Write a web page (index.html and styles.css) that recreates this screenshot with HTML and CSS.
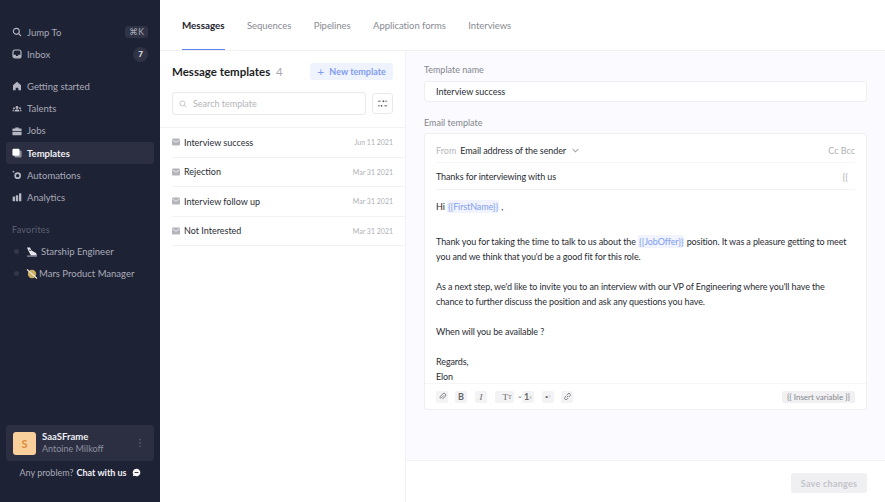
FILE: index.html
```html
<!DOCTYPE html>
<html lang="en">
<head>
  <meta charset="UTF-8">
  <title>Templates</title>
  <link rel="stylesheet" href="styles.css">
</head>
<body>
  <aside class="sidebar">
    <nav class="nav nav-top">
      <a class="nav-item">
        <svg class="nav-icon" viewBox="0 0 12 12"><circle cx="5.2" cy="5.2" r="3.6" fill="none" stroke="currentColor" stroke-width="1.3"/><path d="M8 8l2.8 2.8" stroke="currentColor" stroke-width="1.3"/></svg>
        <span>Jump To</span>
        <span class="kbd">⌘K</span>
      </a>
      <a class="nav-item">
        <svg class="nav-icon" viewBox="0 0 12 12"><rect x="1.2" y="1.2" width="9.6" height="9.6" rx="2.4" fill="none" stroke="currentColor" stroke-width="1.4"/><path d="M1.5 7h2.7l.8 1.3h2l.8-1.3h2.7v3.5h-9z" fill="currentColor"/></svg>
        <span>Inbox</span>
        <span class="count">7</span>
      </a>
    </nav>
    <nav class="nav nav-main">
      <a class="nav-item">
        <svg class="nav-icon" viewBox="0 0 12 12"><path d="M6 1l4.8 4v6H7.6V8H4.4v3H1.2V5z" fill="currentColor"/></svg>
        <span>Getting started</span>
      </a>
      <a class="nav-item">
        <svg class="nav-icon" viewBox="0 0 12 12"><circle cx="6" cy="4.2" r="1.7" fill="currentColor"/><circle cx="2.4" cy="5" r="1.1" fill="currentColor"/><circle cx="9.6" cy="5" r="1.1" fill="currentColor"/><path d="M3 9c0-2 1.4-2.8 3-2.8S9 7 9 9zM.5 8.600c0-1.300.8-2 1.700-2v2zM11.500 8.600c0-1.300-.8-2-1.700-2v2z" fill="currentColor"/></svg>
        <span>Talents</span>
      </a>
      <a class="nav-item">
        <svg class="nav-icon" viewBox="0 0 12 12"><path d="M4 3V1.800h4V3h2.800c.4 0 .7.3.7.700V6H.5V3.700c0-.4.3-.7.7-.7zM.5 7h11v3.300c0 .4-.3.700-.7.700H1.200c-.4 0-.7-.3-.7-.7z" fill="currentColor"/></svg>
        <span>Jobs</span>
      </a>
      <a class="nav-item active">
        <svg class="nav-icon" viewBox="0 0 12 12"><rect x="3" y="3" width="8.500" height="8.500" rx="1.500" fill="#8d8f9c"/><rect x=".5" y=".8" width="8.500" height="8.500" rx="1.500" fill="#fff"/></svg>
        <span>Templates</span>
      </a>
      <a class="nav-item">
        <svg class="nav-icon" viewBox="0 0 12 12"><circle cx="6.800" cy="6.800" r="3" fill="none" stroke="currentColor" stroke-width="2"/><circle cx="1.800" cy="2" r="1" fill="currentColor"/></svg>
        <span>Automations</span>
      </a>
      <a class="nav-item">
        <svg class="nav-icon" viewBox="0 0 12 12"><rect x=".8" y="5.500" width="2.800" height="5.500" rx=".6" fill="currentColor"/><rect x="4.600" y="3.800" width="2.800" height="7.200" rx=".6" fill="currentColor"/><rect x="8.400" y="1.500" width="2.800" height="9.500" rx=".6" fill="currentColor"/></svg>
        <span>Analytics</span>
      </a>
    </nav>
    <div class="fav-title">Favorites</div>
    <nav class="nav">
      <a class="nav-item fav">
        <span class="dot"></span>
        <svg class="emoji" viewBox="0 0 12 12"><path d="M1 1.500h3l1.500 3L10 7l1 2.500H5L2.500 5z" fill="#e6e6ea"/><path d="M1 9.500h10v1.200H1z" fill="#8f93a3"/><path d="M3 4l2 .5" stroke="#444a60"/></svg>
        <span>Starship Engineer</span>
      </a>
      <a class="nav-item fav">
        <span class="dot"></span>
        <svg class="emoji emoji-tight" viewBox="0 0 12 12"><circle cx="6" cy="6" r="4.200" fill="#c9ad62"/><path d="M1 1.500L11 10.500" stroke="#e8e4d4" stroke-width="1.200"/></svg>
        <span>Mars Product Manager</span>
      </a>
    </nav>
    <div class="sidebar-bottom">
      <div class="user-card">
        <div class="avatar">S</div>
        <div class="user-text">
          <div class="user-org">SaaSFrame</div>
          <div class="user-name">Antoine Milkoff</div>
        </div>
        <svg class="user-more" viewBox="0 0 4 12"><circle cx="2" cy="2" r=".8"/><circle cx="2" cy="6" r=".8"/><circle cx="2" cy="10" r=".8"/></svg>
      </div>
      <div class="help">
        Any problem? <b>Chat with us</b>
        <svg class="help-icon" viewBox="0 0 10 10"><path d="M5 .8a4.200 4.200 0 1 1-2 7.900L.9 9.300l.6-2A4.200 4.200 0 0 1 5 .8z" fill="#fff"/><path d="M2.800 5h4.400" stroke="#1e2235"/></svg>
      </div>
    </div>
  </aside>

  <main class="main">
    <header class="tabs">
      <a class="tab active">Messages</a>
      <a class="tab">Sequences</a>
      <a class="tab">Pipelines</a>
      <a class="tab">Application forms</a>
      <a class="tab">Interviews</a>
    </header>
    <div class="content">
      <section class="list-panel">
        <div class="list-head">
          <h2>Message templates <span class="list-count">4</span></h2>
          <button class="new-btn"><span class="plus">+</span> New template</button>
        </div>
        <div class="search-row">
          <div class="search">
            <svg class="search-icon" viewBox="0 0 12 12"><circle cx="5.200" cy="5.200" r="3.800" fill="none" stroke="currentColor" stroke-width="1.100"/><path d="M8 8l3 3" stroke="currentColor" stroke-width="1.100"/></svg>
            Search template
          </div>
          <button class="sort-btn">
            <svg viewBox="0 0 12 12"><path d="M1 3.500h3M9 3.500h2M1 8.500h2M8 8.500h3" stroke="#555a68" stroke-width="1"/><circle cx="7" cy="3.500" r="1" fill="#555a68"/><circle cx="5" cy="8.500" r="1" fill="#555a68"/></svg>
          </button>
        </div>
        <ul class="templates">
          <li class="template"><svg class="mail" viewBox="0 0 10 8"><rect width="8" height="7" x="1" y=".5" rx="1" fill="#b4b5bb"/><path d="M1.500 2L5 4.200 8.500 2" fill="none" stroke="#fff" stroke-width=".7"/></svg><span class="template-name">Interview success</span><span class="template-date">Jun 11 2021</span></li>
          <li class="template"><svg class="mail" viewBox="0 0 10 8"><rect width="8" height="7" x="1" y=".5" rx="1" fill="#b4b5bb"/><path d="M1.500 2L5 4.200 8.500 2" fill="none" stroke="#fff" stroke-width=".7"/></svg><span class="template-name">Rejection</span><span class="template-date">Mar 31 2021</span></li>
          <li class="template"><svg class="mail" viewBox="0 0 10 8"><rect width="8" height="7" x="1" y=".5" rx="1" fill="#b4b5bb"/><path d="M1.500 2L5 4.200 8.500 2" fill="none" stroke="#fff" stroke-width=".7"/></svg><span class="template-name">Interview follow up</span><span class="template-date">Mar 31 2021</span></li>
          <li class="template"><svg class="mail" viewBox="0 0 10 8"><rect width="8" height="7" x="1" y=".5" rx="1" fill="#b4b5bb"/><path d="M1.500 2L5 4.200 8.500 2" fill="none" stroke="#fff" stroke-width=".7"/></svg><span class="template-name">Not Interested</span><span class="template-date">Mar 31 2021</span></li>
        </ul>
      </section>
      <section class="detail">
        <div class="form">
          <label class="field-label">Template name</label>
          <div class="name-input">Interview success</div>
          <label class="field-label email-label">Email template</label>
          <div class="email-card">
            <div class="from-row">
              <span class="from">From</span>
              <span class="sender">Email address of the sender</span>
              <svg class="chev" viewBox="0 0 10 6"><path d="M1 1l4 4 4-4" fill="none" stroke="#555" stroke-width="1.100"/></svg>
              <span class="ccbcc">Cc Bcc</span>
            </div>
            <div class="subject-row">
              <span class="subject">Thanks for interviewing with us</span>
              <span class="subject-var">{{</span>
            </div>
            <div class="body">
              <p class="hi">Hi <span class="var">{{FirstName}}</span> ,</p>
              <p>Thank you for taking the time to talk to us about the <span class="var">{{JobOffer}}</span> position. It was a pleasure getting to meet<br>you and we think that you'd be a good fit for this role.</p>
              <p>As a next step, we'd like to invite you to an interview with our VP of Engineering where you'll have the<br>chance to further discuss the position and ask any questions you have.</p>
              <p>When will you be available ?</p>
              <p class="sign">Regards,<br>Elon</p>
            </div>
            <div class="toolbar">
              <span class="tool"><svg viewBox="0 0 12 12"><path d="M8 4.500L4.500 8a1.300 1.300 0 0 1-1.800-1.800L6.800 2.200a2.300 2.300 0 0 1 3.200 3.200L6 9.500" fill="none" stroke="#666" stroke-width="1"/></svg></span>
              <span class="tool tool-b">B</span>
              <span class="tool tool-i">I</span>
              <span class="tool tool-size">T<small>T</small></span>
              <span class="tool-arrow">⌄</span>
              <span class="tool tool-num">1<small>≡</small></span>
              <span class="tool tool-bul">•<small>≡</small></span>
              <span class="tool"><svg viewBox="0 0 12 12"><path d="M5 7l2-2M4.500 5L2.500 7a2 2 0 0 0 2.800 2.800l1.500-1.800M7.500 7l2-2a2 2 0 0 0-2.800-2.800L5.200 4" fill="none" stroke="#666" stroke-width="1"/></svg></span>
              <span class="insert">{{ Insert variable }}</span>
            </div>
          </div>
        </div>
        <div class="detail-foot">
          <button class="save">Save changes</button>
        </div>
      </section>
    </div>
  </main>
</body>
</html>
```
FILE: styles.css
```css
* {
  box-sizing: border-box;
}

html, body {
  height: 100%;
}

body {
  margin: 0;
  display: flex;
  height: 502px;
  overflow: hidden;
  font-family: Lato, "Open Sans", sans-serif;
  font-size: 9px;
  color: #24262f;
  background: #fff;
}

/* Sidebar */
.sidebar {
  width: 160px;
  flex-shrink: 0;
  background: #1e2235;
  color: #a9abb8;
  display: flex;
  flex-direction: column;
  padding: 21px 6px 0;
}

.nav {
  display: flex;
  flex-direction: column;
}

.nav-main {
  margin-top: 10px;
}

.nav-item {
  height: 22.2px;
  display: flex;
  align-items: center;
  gap: 5px;
  padding: 0 6px;
  border-radius: 3px;
  font-size: 9.5px;
}

.nav-icon {
  width: 10px;
  height: 10px;
  flex-shrink: 0;
  color: #b4b6c2;
}

.nav-item.active {
  background: #2b2f41;
  color: #f0f0f4;
  font-weight: 700;
}

.kbd {
  margin-left: auto;
  background: #2f3345;
  border-radius: 3px;
  font-size: 8.5px;
  padding: 1px 4px;
  color: #a9abb8;
}

.count {
  margin-left: auto;
  width: 15px;
  height: 15px;
  border-radius: 50%;
  background: #2f3345;
  color: #e4e4ea;
  font-size: 8px;
  font-weight: 700;
  display: flex;
  align-items: center;
  justify-content: center;
}

.fav-title {
  margin: 15px 0 6px;
  padding-left: 6px;
  font-size: 9px;
  letter-spacing: .25px;
  color: #5c6072;
}

.dot {
  width: 5px;
  height: 5px;
  border-radius: 50%;
  background: #333749;
  margin: 0 2px;
}

.emoji {
  width: 12px;
  height: 12px;
  margin-right: -2px;
  flex-shrink: 0;
}

.emoji-tight {
  margin-right: -4px;
}

.sidebar-bottom {
  margin-top: auto;
}

.user-card {
  height: 36px;
  background: #2b2f41;
  border-radius: 3px;
  display: flex;
  align-items: center;
  padding: 0 8px 0 7px;
  gap: 6px;
}

.avatar {
  width: 23px;
  height: 23px;
  border-radius: 3px;
  background: #f9cf9b;
  color: #dd8a3c;
  font-size: 11px;
  font-weight: 700;
  display: flex;
  align-items: center;
  justify-content: center;
}

.user-text {
  flex: 1;
  line-height: 12.5px;
}

.user-org {
  color: #eeeef2;
  font-weight: 700;
  font-size: 9.5px;
}

.user-name {
  color: #8e90a0;
}

.user-more {
  width: 4px;
  height: 10px;
  fill: #7d7f90;
  margin-right: 4px;
}

.help {
  height: 41px;
  display: flex;
  align-items: center;
  justify-content: center;
  gap: 3px;
  font-size: 9px;
  padding-bottom: 18px;
  color: #a9abb8;
}

.help b {
  color: #f0f0f4;
}

.help-icon {
  width: 9px;
  height: 9px;
  margin-left: 2px;
}

/* Main */
.main {
  flex: 1;
  display: flex;
  flex-direction: column;
  min-width: 0;
}

.tabs {
  height: 51px;
  display: flex;
  gap: 22.5px;
  padding-left: 22px;
  border-bottom: 1px solid #f0f0f5;
  flex-shrink: 0;
}

.tab {
  height: 50px;
  display: flex;
  align-items: center;
  font-size: 9.5px;
  letter-spacing: -.05px;
  color: #888a92;
}

.tab.active {
  color: #22242c;
  font-weight: 700;
  font-size: 9.8px;
  letter-spacing: 0;
  border-bottom: 1px solid #5b83e8;
}

.content {
  flex: 1;
  display: flex;
  min-height: 0;
}

.list-panel {
  width: 246px;
  flex-shrink: 0;
  border-right: 1px solid #f0f0f5;
}

.list-head {
  display: flex;
  align-items: center;
  justify-content: space-between;
  padding: 9px 12px 0;
  height: 32px;
}

h2 {
  margin: 0;
  font-size: 11.5px;
  font-weight: 700;
  color: #1d1f27;
}

.list-count {
  margin-left: 3px;
  color: #a8a9ae;
  font-weight: 400;
}

.new-btn {
  width: 83px;
  height: 17px;
  border: 0;
  border-radius: 3px;
  background: #eff3fe;
  color: #7f9df0;
  font: 700 9px Lato, sans-serif;
  padding: 0;
}

.plus {
  font-size: 12px;
  font-weight: 400;
  margin-right: 3px;
  vertical-align: -1px;
}

.search-row {
  display: flex;
  justify-content: space-between;
  padding: 9px 12px 0;
  height: 44px;
}

.search {
  width: 194px;
  height: 23px;
  border: 1px solid #e8e8ee;
  border-radius: 3px;
  display: flex;
  align-items: center;
  gap: 6px;
  padding-left: 6px;
  font-size: 9px;
  color: #b3b4ba;
}

.search-icon {
  width: 8px;
  height: 8px;
}

.sort-btn {
  width: 21px;
  height: 21px;
  margin-top: 1px;
  border: 1px solid #e8e8ee;
  border-radius: 3px;
  background: #fff;
  padding: 4px;
}

.sort-btn svg {
  display: block;
  width: 11px;
  height: 11px;
}

.templates {
  margin: 0;
  padding: 0;
  list-style: none;
  border-top: 1px solid #f3f3f7;
}

.template {
  height: 29.5px;
  margin-left: 12px;
  padding-right: 12px;
  display: flex;
  align-items: center;
  border-bottom: 1px solid #f3f3f7;
}

.mail {
  width: 10px;
  height: 8px;
  margin-right: 3px;
  flex-shrink: 0;
  margin-left: -1px;
}

.template-name {
  flex: 1;
  color: #2a2c34;
}

.template-date {
  font-size: 7px;
  color: #b0b1b6;
}

.detail {
  flex: 1;
  display: flex;
  flex-direction: column;
  min-width: 0;
}

.form {
  height: 410px;
  background: #fafaff;
  padding: 13px 18px 0;
  border-bottom: 1px solid #f3f3f7;
}

.field-label {
  display: block;
  font-size: 9px;
  color: #85868d;
  line-height: 12px;
}

.name-input {
  margin-top: 5px;
  height: 21px;
  border: 1px solid #eeeef3;
  border-radius: 3px;
  background: #fff;
  padding-left: 11px;
  display: flex;
  align-items: center;
  color: #2a2c34;
}

.email-label {
  margin-top: 15px;
}

.email-card {
  margin-top: 4px;
  height: 277px;
  background: #fff;
  border: 1px solid #eeeef3;
  border-radius: 3px;
  display: flex;
  flex-direction: column;
}

.from-row {
  height: 28px;
  flex-shrink: 0;
  padding: 4px 11px 0;
  display: flex;
  align-items: center;
  font-size: 9px;
}

.from {
  color: #b5b6bb;
  margin-right: 4px;
}

.sender {
  color: #2a2c34;
  letter-spacing: -.1px;
}

.chev {
  width: 7px;
  height: 5px;
  margin-left: 6px;
}

.ccbcc {
  margin-left: auto;
  color: #b0b1b6;
}

.subject-row {
  height: 28px;
  flex-shrink: 0;
  margin: 0 11px;
  display: flex;
  align-items: center;
  justify-content: space-between;
  border-top: 1px solid #f6f6f9;
  border-bottom: 1px solid #f3f3f7;
  color: #2a2c34;
}

.subject {
  letter-spacing: -.12px;
}

.subject-var {
  color: #b0b1b6;
  margin-right: 7px;
}

.body {
  flex: 1;
  min-height: 0;
  padding: 9px 11px 0;
  line-height: 15px;
  letter-spacing: -.11px;
  color: #2a2c34;
}

.body p {
  margin: 0 0 15px;
}

.body .hi {
  margin-bottom: 20px;
}

.body .sign {
  margin: 0;
}

.var {
  color: #7f9df0;
  background: #f1f4fe;
  border-radius: 2px;
  padding: 1px;
}

.toolbar {
  height: 26px;
  flex-shrink: 0;
  border-top: 1px solid #f6f6f9;
  display: flex;
  align-items: center;
  padding: 0 11px;
  gap: 7px;
  color: #666;
}

.tool {
  width: 12px;
  height: 12px;
  background: #f3f3f5;
  border-radius: 2px;
  display: flex;
  align-items: center;
  justify-content: center;
  font-size: 9px;
  font-family: "Liberation Serif", serif;
}

.tool svg {
  width: 9px;
  height: 9px;
}

.tool-b {
  font-family: Lato, sans-serif;
  font-weight: 700;
}

.tool-i {
  font-style: italic;
  margin-left: 1px;
}

.tool-size {
  width: 19px;
  margin-left: 1px;
  padding-left: 5px;
}

.tool-size small {
  font-size: 6px;
}

.tool-arrow {
  font-size: 7px;
  margin: -3px -8px 0 -4px;
}

.tool-num {
  font-family: Lato, sans-serif;
  font-weight: 700;
}

.tool-num small, .tool-bul small {
  font-size: 5px;
  color: #bbb;
}

.tool-bul {
  margin-left: 1px;
}

.insert {
  margin-left: auto;
  background: #f1f1f3;
  border-radius: 2px;
  height: 12px;
  padding: 0 5px;
  display: flex;
  align-items: center;
  font-size: 8px;
  color: #85868d;
}

.detail-foot {
  flex: 1;
  display: flex;
  justify-content: flex-end;
  align-items: flex-start;
  padding: 12px 18px 0;
}

.save {
  width: 76px;
  height: 20px;
  border: 0;
  border-radius: 3px;
  background: #f0f0f3;
  color: #c3c4c9;
  font: 700 9px Lato, sans-serif;
  letter-spacing: .25px;
}
```
